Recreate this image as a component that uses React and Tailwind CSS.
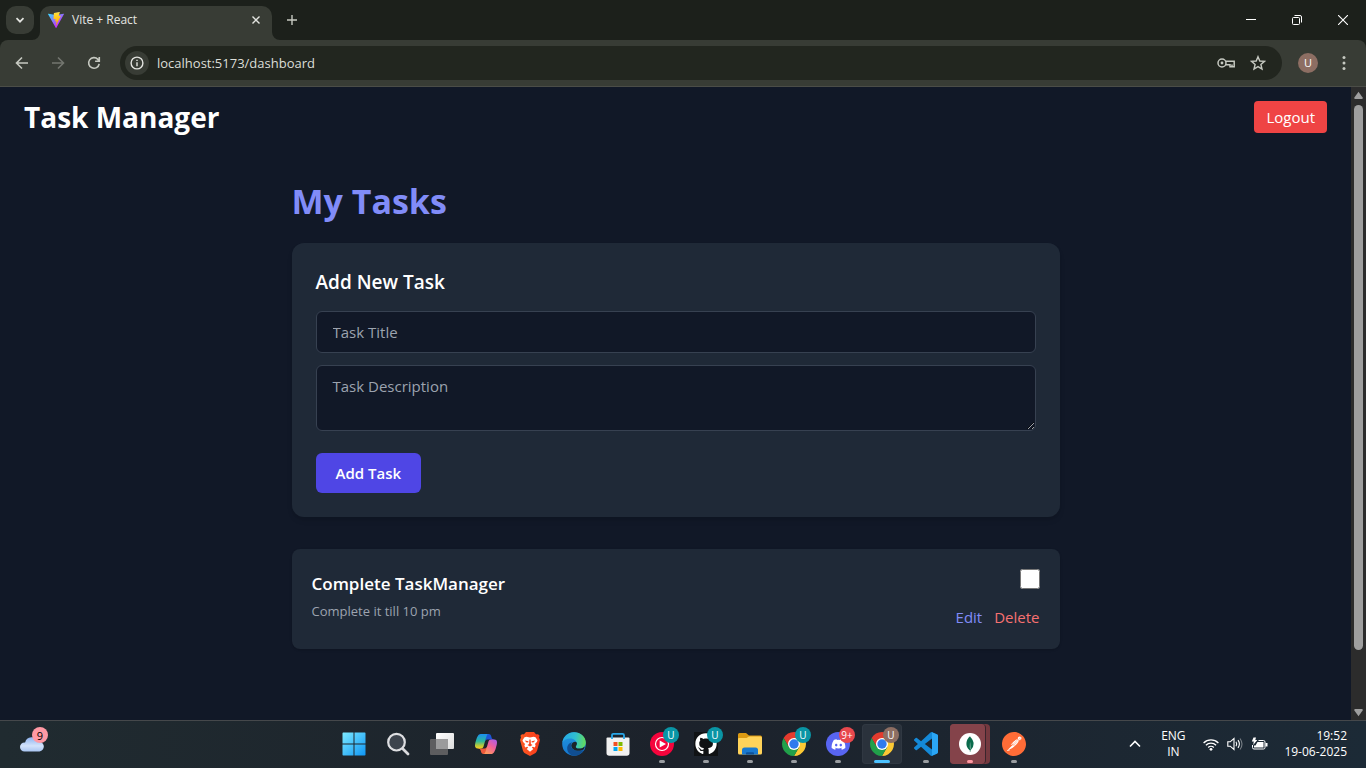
import React, { useState } from "react";
import { SiPostman, SiMongodb } from "react-icons/si";
import { FaGithub, FaDiscord } from "react-icons/fa";

function ViteLogo() {
  return (
    <svg viewBox="0 0 256 257" className="h-4 w-4" aria-hidden="true">
      <defs>
        <linearGradient id="viteA" x1="0" x2="0.58" y1="0.08" y2="0.79">
          <stop offset="0" stopColor="#41D1FF" />
          <stop offset="1" stopColor="#BD34FE" />
        </linearGradient>
        <linearGradient id="viteB" x1="0.43" x2="0.5" y1="0.02" y2="0.89">
          <stop offset="0" stopColor="#FFEA83" />
          <stop offset="0.083" stopColor="#FFDD35" />
          <stop offset="1" stopColor="#FFA800" />
        </linearGradient>
      </defs>
      <path fill="url(#viteA)" d="M255.153 37.938L134.897 252.976c-2.483 4.44-8.862 4.466-11.382.048L.875 37.958c-2.746-4.814 1.371-10.646 6.827-9.67l120.385 21.517a6.537 6.537 0 0 0 2.322-.004l117.867-21.483c5.438-.991 9.574 4.796 6.877 9.62Z" />
      <path fill="url(#viteB)" d="M185.432.063L96.44 17.501a3.268 3.268 0 0 0-2.634 3.014l-5.474 92.456a3.268 3.268 0 0 0 3.997 3.378l24.777-5.718c2.318-.535 4.413 1.507 3.936 3.838l-7.361 36.047c-.495 2.426 1.782 4.5 4.151 3.78l15.304-4.649c2.372-.72 4.652 1.36 4.15 3.788l-11.698 56.621c-.732 3.542 3.979 5.473 5.943 2.437l1.313-2.028l72.516-144.72c1.215-2.423-.88-5.186-3.54-4.672l-25.505 4.922c-2.396.462-4.435-1.77-3.759-4.114l16.646-57.705c.677-2.35-1.37-4.583-3.769-4.113Z" />
    </svg>
  );
}

function TabStrip() {
  return (
    <div className="flex h-10 shrink-0 items-end bg-[#1c201b]">
      <div className="flex h-full w-8 shrink-0 items-center pl-[6px]">
        <button aria-label="Search tabs" className="flex h-7 w-7 shrink-0 items-center justify-center rounded-[10px] bg-[#383c35] text-[#e3e4e0]">
          <svg viewBox="0 0 10 10" className="h-[10px] w-[10px]" fill="none" stroke="currentColor" strokeWidth="1.7"><path d="M1.5 3.2 5 6.7 8.5 3.2" /></svg>
        </button>
      </div>
      <svg viewBox="0 0 8 8" className="h-2 w-2 shrink-0 text-[#383c35]"><path fill="currentColor" d="M8 0v8H0a8 8 0 0 0 8-8Z" /></svg>
      <div className="flex h-[34px] w-[232px] items-center rounded-t-[10px] bg-[#383c35] pr-2 pb-[6px] pl-2 text-[#e3e4e0]">
        <ViteLogo />
        <span className="ml-2 flex-1 text-[12px] leading-4">Vite + React</span>
        <button aria-label="Close tab" className="flex h-4 w-4 items-center justify-center">
          <svg viewBox="0 0 8 8" className="h-2 w-2" stroke="currentColor" strokeWidth="1.4"><path d="M.5.5l7 7M7.500.5l-7 7" /></svg>
        </button>
      </div>
      <svg viewBox="0 0 8 8" className="h-2 w-2 shrink-0 text-[#383c35]"><path fill="currentColor" d="M0 0v8h8a8 8 0 0 1-8-8Z" /></svg>
      <button aria-label="New tab" className="flex h-10 w-6 items-center justify-center text-[#c6c9c1]">
        <svg viewBox="0 0 10 10" className="h-[10px] w-[10px]" stroke="currentColor" strokeWidth="1.4"><path d="M5 0v10M0 5h10" /></svg>
      </button>
      <div className="ml-auto flex h-full text-white">
        <button aria-label="Minimize" className="flex w-[46px] items-center justify-center">
          <svg viewBox="0 0 10 10" className="h-[10px] w-[10px]" stroke="currentColor"><path d="M0 4.500h10" /></svg>
        </button>
        <button aria-label="Restore" className="flex w-[46px] items-center justify-center">
          <svg viewBox="0 0 10 10" className="h-[10px] w-[10px]" fill="none" stroke="currentColor"><rect x=".5" y="2.500" width="7" height="7" rx="1" /><path d="M2.500.5H8A1.500 1.500 0 0 1 9.500 2v5.500" /></svg>
        </button>
        <button aria-label="Close" className="flex w-[46px] items-center justify-center">
          <svg viewBox="0 0 10 10" className="h-[10px] w-[10px]" stroke="currentColor" strokeWidth="1.1"><path d="M0 0l10 10M10 0L0 10" /></svg>
        </button>
      </div>
    </div>
  );
}

function Toolbar() {
  return (
    <div className="shrink-0 bg-[#1c201b]">
      <div className="flex h-[47px] items-center rounded-t-lg border-b border-[#4b4d47] bg-[#383c35] pr-[6px] pl-1 text-[#c6c9c1]">
        <button aria-label="Back" className="flex h-9 w-9 items-center justify-center">
          <svg viewBox="0 0 16 16" className="h-4 w-4" fill="none" stroke="currentColor" strokeWidth="1.6"><path d="M14 8H3M8 2.500 2.500 8 8 13.500" /></svg>
        </button>
        <button aria-label="Forward" className="flex h-9 w-9 items-center justify-center text-[#73766f]">
          <svg viewBox="0 0 16 16" className="h-4 w-4" fill="none" stroke="currentColor" strokeWidth="1.6"><path d="M2 8h11M8 2.500 13.500 8 8 13.500" /></svg>
        </button>
        <button aria-label="Reload" className="flex h-9 w-9 items-center justify-center">
          <svg viewBox="0 0 16 16" className="h-4 w-4" fill="none" stroke="currentColor" strokeWidth="1.6"><path d="M13.200 8.800A5.300 5.300 0 1 1 11.900 4.400L13 5.600M13.300 2v4.200H9.100" /></svg>
        </button>
        <div className="ml-2 flex h-[34px] flex-1 items-center rounded-full bg-[#22261f] pr-2 pl-[5px]">
          <button aria-label="Site information" className="flex h-6 w-6 items-center justify-center rounded-full bg-[#383c35] text-[#e3e4e0]">
            <svg viewBox="0 0 14 14" className="h-[14px] w-[14px]" fill="none" stroke="currentColor" strokeWidth="1.4"><circle cx="7" cy="7" r="5.900" /><path d="M7 6.200v4M7 3.700v1.400" /></svg>
          </button>
          <input aria-label="Address" defaultValue="localhost:5173/dashboard" className="ml-2 min-w-0 flex-1 bg-transparent text-[13px] leading-5 text-[#dcded8] outline-none" />
          <button aria-label="Saved passwords" className="flex h-8 w-8 items-center justify-center">
            <svg viewBox="0 0 18 12" className="h-3 w-[18px]" fill="none" stroke="currentColor" strokeWidth="1.500"><circle cx="5" cy="6" r="4" /><circle cx="5" cy="6" r="1.400" fill="currentColor" stroke="none" /><path d="M8.600 4.200h8.600v5.600h-4.200v-2H8.600M15 7.500v2" /></svg>
          </button>
          <button aria-label="Bookmark" className="flex h-8 w-8 shrink-0 items-center justify-center">
            <svg viewBox="0 0 16 16" className="h-4 w-4" fill="none" stroke="currentColor" strokeWidth="1.400"><path d="M8 1.700l1.800 4.300 4.700.4-3.600 3 1.100 4.600L8 11.600 4 14l1.100-4.600-3.600-3L6.200 6z" /></svg>
          </button>
        </div>
        <button className="mr-[10px] ml-4 flex h-5 w-5 items-center justify-center rounded-full bg-[#8d6e63] text-[11px] text-white">U</button>
        <button aria-label="Menu" className="flex h-8 w-8 items-center justify-center">
          <svg viewBox="0 0 4 14" className="h-[14px] w-1" fill="currentColor"><circle cx="2" cy="1.500" r="1.500" /><circle cx="2" cy="7" r="1.500" /><circle cx="2" cy="12.500" r="1.500" /></svg>
        </button>
      </div>
    </div>
  );
}

function TaskForm() {
  return (
    <form onSubmit={(e) => e.preventDefault()} className="rounded-xl bg-[#1f2937] p-6 shadow-md">
      <h2 className="mb-[14px] text-[19px] leading-[30px] font-semibold">Add New Task</h2>
      <input aria-label="Task Title" placeholder="Task Title" className="mb-3 block w-full rounded-md border border-[#374151] bg-[#111827] px-4 py-2 text-[15px] leading-6 outline-none placeholder:text-[#9ca3af]" />
      <textarea aria-label="Task Description" placeholder="Task Description" rows={2} className="block w-full rounded-md border border-[#374151] bg-[#111827] px-4 py-2 text-[15px] leading-6 outline-none placeholder:text-[#9ca3af]" />
      <button type="submit" className="mt-[22px] rounded-md bg-[#4f46e5] px-5 py-2 text-[15px] leading-6 font-semibold">Add Task</button>
    </form>
  );
}

function TaskItem({ title, description }) {
  const [done, setDone] = useState(false);
  return (
    <li className="flex justify-between rounded-lg bg-[#1f2937] p-5 shadow">
      <div>
        <h3 className="text-[17px] leading-[30px] font-semibold">{title}</h3>
        <p className="mt-[2px] text-[13px] leading-5 text-[#9ca3af]">{description}</p>
      </div>
      <div className="flex flex-col items-end gap-4">
        <input type="checkbox" aria-label={title} checked={done} onChange={(e) => setDone(e.target.checked)} className="h-5 w-5" />
        <div className="flex gap-3 text-[15px] leading-6">
          <button className="text-[#818cf8]">Edit</button>
          <button className="text-[#f87171]">Delete</button>
        </div>
      </div>
    </li>
  );
}

function Dashboard() {
  return (
    <div className="min-w-0 flex-1 overflow-hidden bg-[#111827] text-white">
      <header className="flex items-center justify-between px-6 py-3">
        <h1 className="text-[28px] leading-9 font-bold">Task Manager</h1>
        <button className="rounded bg-[#ef4444] px-3 py-1 text-[15px] leading-6">Logout</button>
      </header>
      <main className="mx-auto max-w-3xl py-8">
        <h2 className="mb-5 text-[34px] leading-[44px] font-bold text-[#818cf8]">My Tasks</h2>
        <TaskForm />
        <ul className="mt-8">
          <TaskItem title="Complete TaskManager" description="Complete it till 10 pm" />
        </ul>
      </main>
    </div>
  );
}

function Scrollbar() {
  return (
    <div className="flex w-[15px] shrink-0 flex-col items-center bg-[#2c2c2c] text-[#9f9f9f]" aria-hidden="true">
      <svg viewBox="0 0 15 18" className="h-[18px] w-[15px]" fill="currentColor"><path d="M7.500 4.800 11.600 10.500a1 1 0 0 1-.8 1.500H4.200a1 1 0 0 1-.8-1.500Z" /></svg>
      <div className="w-full flex-1 px-[3px]">
        <div className="h-[91%] rounded-full bg-[#9f9f9f]" />
      </div>
      <svg viewBox="0 0 15 16" className="h-4 w-[15px]" fill="currentColor"><path d="M7.500 12.200 11.600 6.500a1 1 0 0 0-.8-1.500H4.200a1 1 0 0 0-.8 1.500Z" /></svg>
    </div>
  );
}

function WindowsIcon() {
  return (
    <svg viewBox="0 0 24 24" className="h-6 w-6">
      <defs><linearGradient id="win" x1="0" y1="0" x2="24" y2="24" gradientUnits="userSpaceOnUse"><stop stopColor="#7fecff" /><stop offset="1" stopColor="#0c94f5" /></linearGradient></defs>
      <path fill="url(#win)" d="M.5 1.200q0-.7.700-.7H11.500v11H.5ZM12.500.5H22.800q.7 0 .7.700V11.500h-11ZM.5 12.500h11v11H1.200q-.7 0-.7-.7ZM12.500 12.500h11V22.800q0 .7-.7.700H12.500Z" />
    </svg>
  );
}

function SearchIcon() {
  return (
    <svg viewBox="0 0 24 24" className="h-6 w-6" fill="none">
      <path d="M17 17l5 5" stroke="#d9dadd" strokeWidth="2.800" strokeLinecap="round" />
      <circle cx="10.500" cy="10.200" r="8.300" fill="#3d444d" stroke="#dedfe2" strokeWidth="2.200" />
    </svg>
  );
}

function TaskViewIcon() {
  return (
    <svg viewBox="0 0 24 24" className="h-6 w-6">
      <defs><linearGradient id="tv" x1="0" y1="0" x2="1" y2="1"><stop stopColor="#fff" /><stop offset="1" stopColor="#dcdcdc" /></linearGradient></defs>
      <rect x="6" y="1" width="18" height="16" rx="1" fill="url(#tv)" />
      <rect x="0" y="7" width="18" height="16" rx="1" fill="#5d5d5f" />
      <path d="M6 7h12v10H6z" fill="#9b9b9c" />
    </svg>
  );
}

function CopilotIcon() {
  return (
    <svg viewBox="0 0 48 48" className="h-6 w-6">
      <defs>
        <linearGradient id="cpA" x1="0" y1="0" x2="0" y2="1"><stop stopColor="#1b8ff2" /><stop offset=".5" stopColor="#2cb89c" /><stop offset=".8" stopColor="#b9c83a" /><stop offset="1" stopColor="#f2cf22" /></linearGradient>
        <linearGradient id="cpB" x1="1" y1="0" x2=".3" y2="1"><stop stopColor="#a65cf0" /><stop offset=".5" stopColor="#f0609a" /><stop offset="1" stopColor="#ff9a5c" /></linearGradient>
      </defs>
      <path fill="#1c55d8" d="M34.142 7.325A4.630 4.630 0 0 0 29.700 4H28.350a4.630 4.630 0 0 0-4.554 3.794L21.480 20.407l.575-1.965a4.630 4.630 0 0 1 4.444-3.330h7.853l3.294 1.282 3.175-1.282h-.926a4.630 4.630 0 0 1-4.443-3.325l-1.310-4.462z" />
      <path fill="#ee5a3c" d="M14.330 40.656A4.630 4.630 0 0 0 18.779 44h2.870a4.630 4.630 0 0 0 4.629-4.510l.312-12.163-.654 2.233a4.630 4.630 0 0 1-4.443 3.329h-7.919l-2.823-1.532-3.057 1.532h.912a4.630 4.630 0 0 1 4.448 3.344l1.279 4.423z" />
      <path fill="url(#cpA)" d="M29.500 4H13.460c-4.583 0-7.332 6.057-9.165 12.113C2.123 23.290-.72 32.885 7.503 32.885h6.925a4.630 4.630 0 0 0 4.456-3.358 2078 2078 0 0 1 4.971-17.156c.843-2.843 1.544-5.284 2.621-6.805C27.080 4.714 28.086 4 29.500 4" />
      <path fill="url(#cpB)" d="M18.498 44h16.040c4.582 0 7.332-6.058 9.165-12.115 2.171-7.177 5.013-16.775-3.208-16.775h-6.926a4.630 4.630 0 0 0-4.455 3.358 2084 2084 0 0 1-4.972 17.160c-.842 2.844-1.544 5.285-2.620 6.806-.604.852-1.610 1.566-3.024 1.566" />
    </svg>
  );
}

function BraveIcon() {
  return (
    <svg viewBox="0 0 24 24" className="h-6 w-6">
      <defs><linearGradient id="br" x1="0" y1="0" x2="1" y2="0"><stop stopColor="#fb5a22" /><stop offset="1" stopColor="#f93a1c" /></linearGradient></defs>
      <path fill="url(#br)" d="M8 0h8l2.200 2.400c1.400-.3 2.400.2 3.300 1.300L21 5.600l1 2.300-2.900 10.600c-.4 1.300-1 2-2 2.700L12 24l-5.100-2.800c-1-.7-1.600-1.400-2-2.700L2 7.900l1-2.300-.5-1.900C3.400 2.600 4.400 2.100 5.800 2.400Z" />
      <path fill="#fff" d="M8.500 4.800 12 5.500l3.500-.7 2 .4 2 3.100c-.2 1.400-1.300 2.500-2.500 3.700l.6 1.600-.8 1.800-2-.7-1 .9 1.500 1.300-3.300 2.800-3.300-2.800 1.500-1.300-1-.9-2 .7-.8-1.800.6-1.600C5.800 10.800 4.700 9.700 4.500 8.300l2-3.100Z" />
      <path fill="#f9451e" d="M6.800 8.600l3.700.7-.3 1.300-2-.4ZM17.200 8.600l-3.700.7.3 1.300 2-.4ZM11.400 7.500h1.200l.3 4.500 1.600 1-2.500 1.500L9.500 13l1.600-1Z" />
    </svg>
  );
}

function EdgeIcon() {
  return (
    <svg viewBox="0 0 24 24" className="h-6 w-6">
      <defs>
        <linearGradient id="edA" x1="0" y1=".3" x2="1" y2=".4"><stop stopColor="#24a8e6" /><stop offset=".55" stopColor="#30bfd0" /><stop offset="1" stopColor="#63dc5c" /></linearGradient>
        <linearGradient id="edB" x1="0" y1="0" x2="0" y2="1"><stop stopColor="#2396e0" /><stop offset="1" stopColor="#1477cf" /></linearGradient>
      </defs>
      <circle cx="12" cy="12" r="11.800" fill="url(#edB)" />
      <path fill="url(#edA)" d="M.4 10.400C1.400 4.400 6.200.2 12 .2c6.700 0 11.800 4.600 11.800 10.300 0 3.700-2.900 6.100-6.300 6.100-2.600 0-4-.8-4-1.900 0-.9 1.300-1.200 1.300-3.100 0-2.600-2.500-5.200-6.600-5.200C4.700 6.400 2 7.600.4 10.400Z" />
      <path fill="#104e92" d="M22 17.400c-1.700 1-3.400 1.500-5.500 1.500-4.500 0-7.600-2.700-7.600-5.700 0-1.300.5-2.300 1.600-3-3.300.3-5.300 3.100-5.300 6.200 0 4.500 4.200 7.500 8.100 7.300 4.100-.3 7-2.800 8.700-6.300Z" />
      <path fill="#1c2329" d="M14.700 10.400c.9 2-.9 3.100-.9 4.300 0 .9.900 1.700 3 1.900 2 .1 4-.6 5.100-1.700.6-.5.9.1.600.8-.2.600-.4 1.200-.7 1.600-2.100 1.300-4.400 1.700-6.600 1.400-3.500-.5-5.800-2.700-5.900-5.300 0-2.600 3.900-4.800 5.400-3Z" />
    </svg>
  );
}

function StoreIcon() {
  return (
    <svg viewBox="0 0 24 24" className="h-6 w-6">
      <path fill="#f1f1f1" d="M1.500 5.500h21q1 0 1 1V21q0 2.800-2.800 2.800H3.300Q.5 23.800.5 21V6.500q0-1 1-1Z" />
      <path d="M6 7V3.200Q6 1.800 7.400 1.800h9.200Q18 1.800 18 3.200V7" fill="none" stroke="#2aa7e8" strokeWidth="1.800" />
      <path fill="#f25022" d="M7.500 10h4v4h-4z" /><path fill="#7fba00" d="M12.500 10h4v4h-4z" />
      <path fill="#00a4ef" d="M7.500 15h4v4h-4z" /><path fill="#ffb900" d="M12.500 15h4v4h-4z" />
    </svg>
  );
}

function MusicIcon() {
  return (
    <svg viewBox="0 0 24 24" className="h-6 w-6">
      <circle cx="12" cy="12" r="12" fill="#f5043c" />
      <circle cx="12" cy="12" r="6.500" fill="none" stroke="#fff" strokeWidth="1.200" />
      <path fill="#fff" d="M9.700 8.400 16 12l-6.300 3.600Z" />
    </svg>
  );
}

function GithubIcon() {
  return (
    <span className="flex h-6 w-6 items-center justify-center bg-[#101214] text-white"><FaGithub size={22} /></span>
  );
}

function FolderIcon() {
  return (
    <svg viewBox="0 0 24 24" className="h-6 w-6">
      <path fill="#dc9a12" d="M0 2.500q0-1.500 1.500-1.500H8l3 2.500h11.500Q24 3.500 24 5v8H0Z" />
      <path fill="#ffd35a" d="M0 7q0-1 1-1h7.500L11 4.500h11.500Q24 4.500 24 6v15q0 1.500-1.500 1.500h-21Q0 22.500 0 21Z" />
      <path fill="#1979cf" d="M4 22.500V18q0-2.500 2.500-2.500h11Q20 15.500 20 18v4.500Z" />
      <path fill="#0d5199" d="M8 22.500v-1.200q0-1 1-1h6q1 0 1 1v1.200Z" />
    </svg>
  );
}

function ChromeIcon() {
  return (
    <svg viewBox="0 0 24 24" className="h-6 w-6">
      <path fill="#e33b2e" d="M1.610 6 6.800 15 12 12V6h10.390A12 12 0 0 0 1.610 6Z" />
      <path fill="#fcc934" d="M22.390 6A12 12 0 0 1 12 24l5.200-9L12 12V6Z" />
      <path fill="#21a04a" d="M1.610 6A12 12 0 0 0 12 24l5.200-9L12 12 6.800 15Z" />
      <circle cx="12" cy="12" r="6" fill="#fff" />
      <circle cx="12" cy="12" r="4.700" fill="#2f7bee" />
    </svg>
  );
}

function DiscordIcon() {
  return (
    <span className="flex h-6 w-6 items-center justify-center rounded-full bg-[#5865f2] text-white"><FaDiscord size={15} /></span>
  );
}

function CodeIcon() {
  return (
    <svg viewBox="0 0 24 24" className="h-6 w-6">
      <path fill="#1489d8" d="M23.150 2.587L18.210.21a1.494 1.494 0 0 0-1.705.29l-9.460 8.630-4.120-3.128a.999.999 0 0 0-1.276.057L.327 7.261A1 1 0 0 0 .326 8.740L3.899 12 .326 15.260a1 1 0 0 0 .001 1.479L1.650 17.940a.999.999 0 0 0 1.276.057l4.120-3.128 9.460 8.630a1.492 1.492 0 0 0 1.704.29l4.942-2.377A1.500 1.500 0 0 0 24 20.060V3.939a1.500 1.500 0 0 0-.85-1.352zm-5.146 14.861L10.826 12l7.178-5.448v10.896z" />
      <path fill="#2ba6f5" d="M18.004.15 23.150 2.587A1.500 1.500 0 0 1 24 3.939V20.060a1.500 1.500 0 0 1-.85 1.352l-5.146 2.437Z" />
    </svg>
  );
}

function CompassIcon() {
  return (
    <span className="flex h-10 w-9 items-center justify-center rounded border-r border-[#3a252c] bg-[#84434a] pl-1">
      <span className="flex h-[22px] w-[22px] items-center justify-center rounded-full bg-white text-[#0b6b4c]"><SiMongodb size={16} /></span>
    </span>
  );
}

function PostmanIcon() {
  return (
    <svg viewBox="0 0 24 24" className="h-6 w-6 text-[#ff6c37]"><circle cx="12" cy="12" r="11" fill="#fff" /><SiPostman size={24} /></svg>
  );
}

const APPS = [
  { name: "Start", Icon: WindowsIcon },
  { name: "Search", Icon: SearchIcon },
  { name: "Task View", Icon: TaskViewIcon },
  { name: "Copilot", Icon: CopilotIcon },
  { name: "Brave", Icon: BraveIcon },
  { name: "Edge", Icon: EdgeIcon },
  { name: "Store", Icon: StoreIcon },
  { name: "YouTube Music", Icon: MusicIcon, badge: "U", tone: "bg-[#0a95a5]", open: true },
  { name: "GitHub", Icon: GithubIcon, badge: "U", tone: "bg-[#0a95a5]", open: true },
  { name: "File Explorer", Icon: FolderIcon, open: true },
  { name: "Chrome", Icon: ChromeIcon, badge: "U", tone: "bg-[#0a95a5]", open: true },
  { name: "Discord", Icon: DiscordIcon, badge: "9+", tone: "bg-[#e8484d]", open: true },
  { name: "Chrome, active window", Icon: ChromeIcon, badge: "U", tone: "bg-[#8d6e63]", active: true },
  { name: "Visual Studio Code", Icon: CodeIcon, open: true },
  { name: "MongoDB Compass", Icon: CompassIcon, alert: true },
  { name: "Postman", Icon: PostmanIcon, open: true },
];

function AppButton({ app }) {
  const { Icon } = app;
  return (
    <button
      aria-label={app.name}
      className={
        "relative flex h-10 w-10 items-center rounded " +
        (app.active ? "justify-center bg-[#2a323c] ring-1 ring-[#303842] ring-inset" : app.alert ? "bg-[#74393f]" : "justify-center")
      }
    >
      <Icon />
      {app.badge && (
        <span className={"absolute top-[3px] right-[3px] flex h-4 w-4 items-center justify-center rounded-full text-[10px] leading-none text-white " + app.tone}>{app.badge}</span>
      )}
      {app.open && <span className="absolute bottom-[1px] left-[17px] h-[3px] w-[6px] rounded-full bg-[#9a9da1]" />}
      {app.active && <span className="absolute bottom-[1px] left-3 h-[3px] w-4 rounded-full bg-[#4cc2ff]" />}
      {app.alert && <span className="absolute bottom-[1px] left-[17px] h-[3px] w-[6px] rounded-full bg-[#ff99a4]" />}
    </button>
  );
}

function Taskbar() {
  return (
    <footer className="grid h-12 shrink-0 grid-cols-[1fr_auto_1fr] items-center border-t border-[#45484b] bg-linear-to-r from-[#202b30] via-[#1c222b] to-[#1c2a36] pb-px pl-[2px] text-white">
      <button aria-label="Weather" className="relative ml-[18px] flex h-10 w-7 items-center">
        <svg viewBox="0 0 24 16" className="h-4 w-6">
          <defs><linearGradient id="cl" x1="0" y1="0" x2="0" y2="1"><stop stopColor="#8db3f0" /><stop offset=".6" stopColor="#d3e3fb" /><stop offset="1" stopColor="#a9c5f2" /></linearGradient></defs>
          <path fill="url(#cl)" d="M4.500 15.500a4.500 4.500 0 0 1 0-9h.6A6.800 6.800 0 0 1 18 5.500a5 5 0 0 1 1.500 10Z" />
        </svg>
        <span className="absolute top-[3px] right-0 flex h-4 w-4 items-center justify-center rounded-full bg-[#ff99a4] text-[11px] leading-none text-black">9</span>
      </button>
      <nav className="flex gap-1">
        {APPS.map((app) => <AppButton key={app.name} app={app} />)}
      </nav>
      <div className="flex items-center justify-end pr-[19px] text-[12px] leading-4">
        <button aria-label="Show hidden icons" className="flex h-8 w-8 items-center justify-center">
          <svg viewBox="0 0 12 8" className="h-2 w-3" fill="none" stroke="currentColor" strokeWidth="1.600"><path d="M1 6.500l5-5 5 5" /></svg>
        </button>
        <button className="w-11 text-center">ENG<br />IN</button>
        <button aria-label="Network, volume and battery" className="mx-2 flex items-center gap-2">
          <svg viewBox="0 0 16 13" className="h-[13px] w-4" fill="none" stroke="currentColor" strokeWidth="1.300"><path d="M.6 5a10.500 10.500 0 0 1 14.800 0M2.900 7.300a7.200 7.200 0 0 1 10.200 0M5.200 9.500a4 4 0 0 1 5.600 0" /><circle cx="8" cy="11.300" r="1.400" fill="currentColor" stroke="none" /></svg>
          <svg viewBox="0 0 16 14" className="h-[14px] w-4" fill="none" stroke="currentColor" strokeWidth="1.100"><path d="M.8 4.800h2.400L7 1.500v11L3.200 9.200H.8ZM9 4.800q1.500 2.200 0 4.400M11 3.200q2.800 3.800 0 7.600" /><path d="M13 1.500q4 5.500 0 11" opacity=".4" /></svg>
          <svg viewBox="0 0 17 14" className="h-[14px] w-[17px]" fill="none">
            <path d="M7.500 3.500h5q1.500 0 1.500 1.500v5.500q0 1.500-1.500 1.500H3q-1.500 0-1.500-1.500V8" stroke="#fff" />
            <path fill="#fff" d="M6.500 5h6v5.500h-9.500V8.500h1.500ZM14.500 6h2v3.500h-2ZM2.500.5h2.500L4.300 3h2L2.200 8l.6-3.500H.8Z" />
          </svg>
        </button>
        <button className="ml-2 text-right">19:52<br />19-06-2025</button>
      </div>
    </footer>
  );
}

export default function App() {
  return (
    <div className="flex h-screen flex-col overflow-hidden font-['Open_Sans','Noto_Sans',sans-serif]">
      <TabStrip />
      <Toolbar />
      <div className="flex min-h-0 flex-1">
        <Dashboard />
        <Scrollbar />
      </div>
      <Taskbar />
    </div>
  );
}
